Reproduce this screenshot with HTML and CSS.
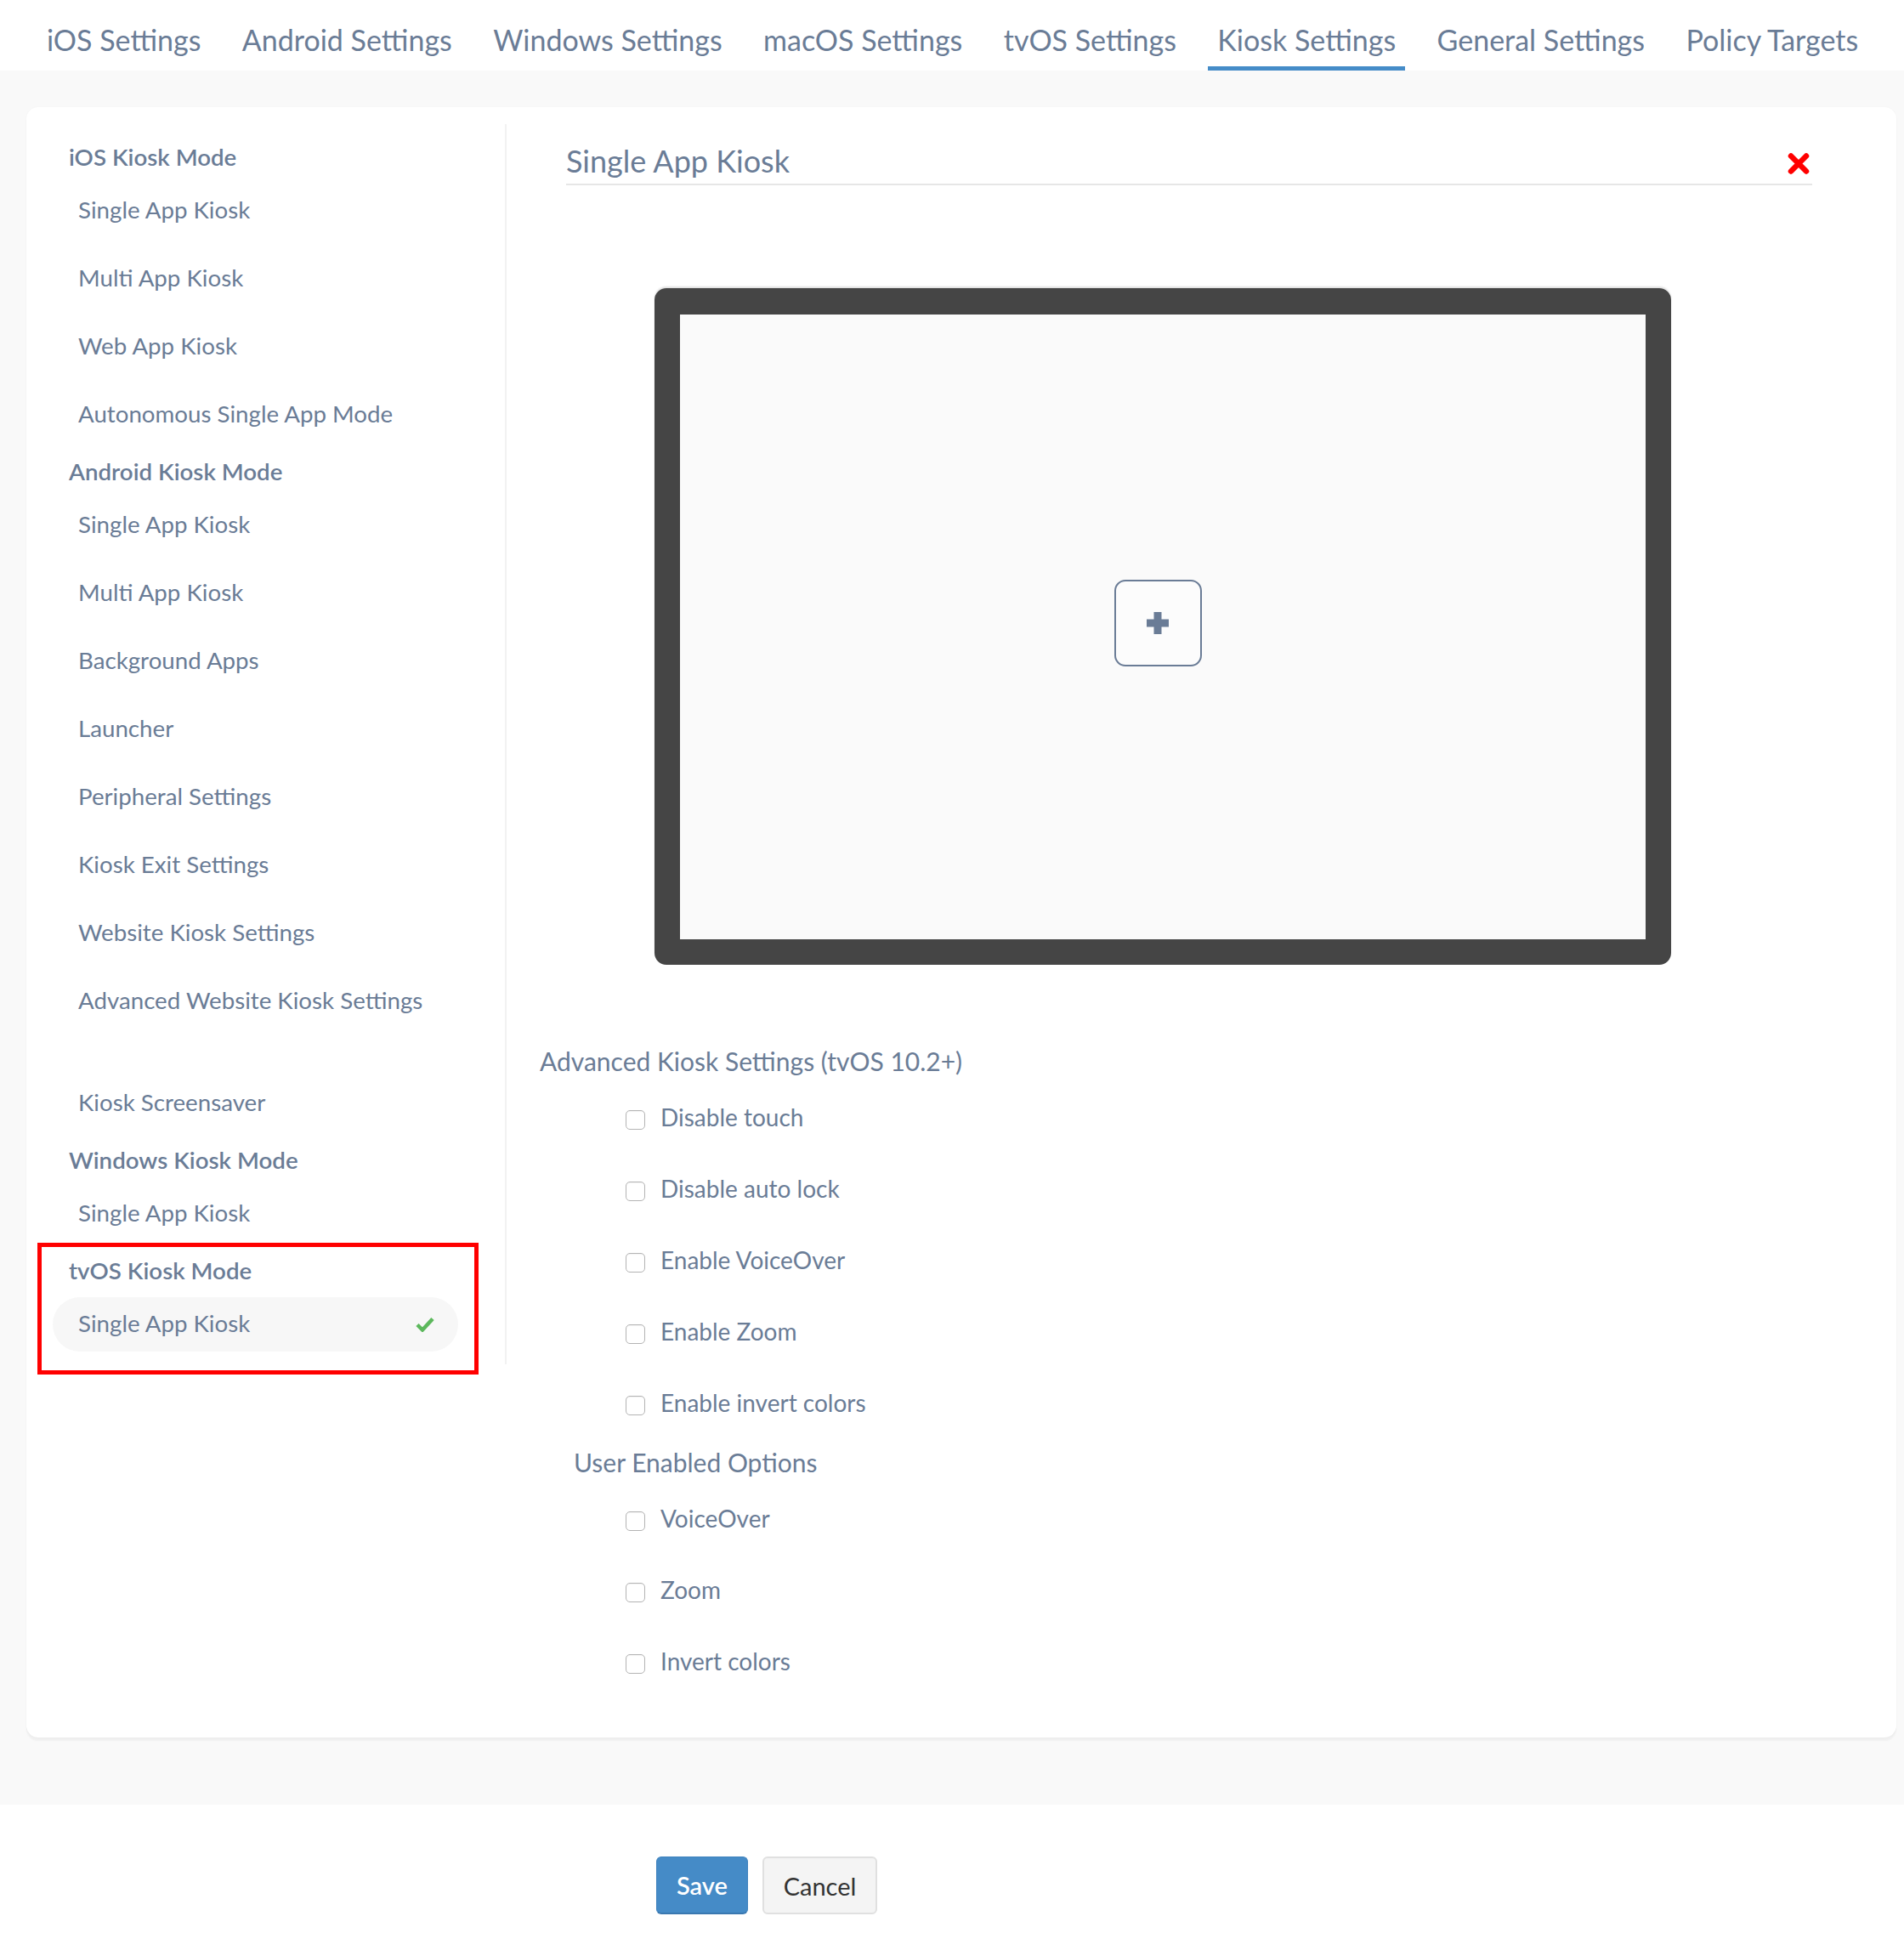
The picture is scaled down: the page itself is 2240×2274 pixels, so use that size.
FILE: index.html
```html
<!DOCTYPE html>
<html lang="en">
<head>
  <meta charset="UTF-8">
  <meta name="viewport" content="width=device-width, initial-scale=1.0">
  <title>Kiosk Settings</title>
  <link rel="stylesheet" href="styles.css">
</head>
<body>
  <nav class="tabs">
    <a class="tab">iOS Settings</a>
    <a class="tab">Android Settings</a>
    <a class="tab">Windows Settings</a>
    <a class="tab">macOS Settings</a>
    <a class="tab">tvOS Settings</a>
    <a class="tab active">Kiosk Settings</a>
    <a class="tab">General Settings</a>
    <a class="tab">Policy Targets</a>
  </nav>

  <div class="content">
    <div class="card">
      <aside class="side">
        <div class="group">
          <div class="group-title">iOS Kiosk Mode</div>
          <a class="item">Single App Kiosk</a>
          <a class="item">Multi App Kiosk</a>
          <a class="item">Web App Kiosk</a>
          <a class="item">Autonomous Single App Mode</a>
        </div>
        <div class="group">
          <div class="group-title">Android Kiosk Mode</div>
          <a class="item">Single App Kiosk</a>
          <a class="item">Multi App Kiosk</a>
          <a class="item">Background Apps</a>
          <a class="item">Launcher</a>
          <a class="item">Peripheral Settings</a>
          <a class="item">Kiosk Exit Settings</a>
          <a class="item">Website Kiosk Settings</a>
          <a class="item">Advanced Website Kiosk Settings</a>
          <div class="spacer"></div>
          <a class="item">Kiosk Screensaver</a>
        </div>
        <div class="group">
          <div class="group-title">Windows Kiosk Mode</div>
          <a class="item">Single App Kiosk</a>
        </div>
        <div class="group marked">
          <div class="group-title">tvOS Kiosk Mode</div>
          <a class="item selected">Single App Kiosk
            <svg class="check" width="22" height="18" viewBox="0 0 22 18"><path d="M2 9.5 L8 15.5 L20 2.5" fill="none" stroke="#5cb85c" stroke-width="4.5"/></svg>
          </a>
        </div>
      </aside>

      <section class="main">
        <div class="title-row">
          <h2>Single App Kiosk</h2>
          <svg class="close" width="26" height="25" viewBox="0 0 26 25"><path d="M4 3.5 L22 21.5 M22 3.5 L4 21.5" stroke="#ff0000" stroke-width="6.5" stroke-linecap="round"/></svg>
        </div>

        <div class="device">
          <div class="screen">
            <button class="add">
              <svg width="26" height="26" viewBox="0 0 26 26"><rect x="8.5" y="0" width="9" height="26" fill="#6a7c96"/><rect x="0" y="8.5" width="26" height="9" fill="#6a7c96"/></svg>
            </button>
          </div>
        </div>

        <h3 class="section-title">Advanced Kiosk Settings (tvOS 10.2+)</h3>
        <label class="check-row"><span class="box"></span>Disable touch</label>
        <label class="check-row"><span class="box"></span>Disable auto lock</label>
        <label class="check-row"><span class="box"></span>Enable VoiceOver</label>
        <label class="check-row"><span class="box"></span>Enable Zoom</label>
        <label class="check-row"><span class="box"></span>Enable invert colors</label>

        <h3 class="section-title sub">User Enabled Options</h3>
        <label class="check-row"><span class="box"></span>VoiceOver</label>
        <label class="check-row"><span class="box"></span>Zoom</label>
        <label class="check-row"><span class="box"></span>Invert colors</label>
      </section>
    </div>
  </div>

  <div class="actions">
    <button class="btn save">Save</button>
    <button class="btn cancel">Cancel</button>
  </div>
</body>
</html>
```

FILE: styles.css
```css
body {
  margin: 0;
  font-family: Lato, "Open Sans", sans-serif;
  color: #6a7c96;
  background: #fff;
}
.tabs {
  display: flex;
  height: 83px;
  padding-left: 44px;
  background: #fff;
}
.tab {
  padding: 26px 11px 11px;
  margin-right: 26.4px;
  font-size: 34px;
  line-height: 41px;
  border-bottom: 5px solid transparent;
  white-space: nowrap;
  cursor: pointer;
}
.tab.active {
  border-bottom-color: #458cc8;
}
.content {
  background: #f9f9f9;
  padding: 43px 9px 79px 31px;
}
.card {
  display: flex;
  align-items: flex-start;
  background: #fff;
  border-radius: 14px;
  box-shadow: 0 4px 2px rgba(0, 0, 0, 0.04), 0 0 2px rgba(0, 0, 0, 0.04);
}
.side {
  width: 563px;
  margin-top: 20px;
  padding: 18px 0 7px;
  border-right: 2px solid #f2f2f2;
}
.group {
  position: relative;
  display: flex;
  flex-direction: column;
}
.group + .group {
  margin-top: 6px;
}
.group-title {
  height: 44px;
  line-height: 42px;
  padding-left: 50px;
  font-size: 27.7px;
  font-weight: 600;
}
.item {
  position: relative;
  display: block;
  height: 64px;
  line-height: 62px;
  margin: 8px 0 8px 31px;
  padding-left: 30px;
  width: 477px;
  box-sizing: border-box;
  font-size: 27.7px;
  border-radius: 32px;
  cursor: pointer;
}
.item.selected {
  background: #f7f7f7;
}
.check {
  position: absolute;
  right: 28px;
  top: 23px;
}
.spacer {
  height: 40px;
}
.group.marked::after {
  content: "";
  position: absolute;
  top: -12px;
  bottom: -19px;
  left: 13px;
  width: 519px;
  box-sizing: border-box;
  border: 5px solid #ff0000;
}
.main {
  flex: 1;
  padding: 42px 99px 48px 39px;
}
.title-row {
  display: flex;
  justify-content: space-between;
  align-items: center;
  margin-left: 31px;
  padding-bottom: 6px;
  border-bottom: 2px solid #e6e6e6;
}
.title-row h2 {
  margin: 0;
  font-size: 36px;
  font-weight: 400;
  line-height: 42px;
}
.close {
  margin-right: 3px;
  margin-top: 6px;
}
.device {
  margin: 121px 0 0 135px;
  width: 1196px;
  height: 796px;
  box-sizing: border-box;
  border: 30px solid #454545;
  border-top-width: 31px;
  border-radius: 14px;
  box-shadow: 0 -2px 2px rgba(0, 0, 0, 0.12);
}
.screen {
  height: 100%;
  background: #fafafa;
  display: flex;
  justify-content: center;
  align-items: center;
}
.add {
  width: 103px;
  height: 102px;
  margin: 0 12px 10px 0;
  border: 2.5px solid #6a7c96;
  border-radius: 13px;
  background: #fcfcfc;
  display: flex;
  justify-content: center;
  align-items: center;
  cursor: pointer;
}
.section-title {
  margin: 95px 0 0;
  height: 42px;
  line-height: 36px;
  padding-bottom: 6px;
  box-sizing: border-box;
  font-size: 30px;
  font-weight: 400;
}
.section-title.sub {
  margin-top: 10px;
  padding-left: 40px;
}
.check-row {
  display: flex;
  align-items: center;
  height: 84px;
  padding-left: 101px;
  font-size: 28px;
  cursor: pointer;
}
.box {
  width: 23px;
  height: 23px;
  margin: 6px 18px 0 0;
  box-sizing: border-box;
  border: 1.5px solid #b4b4b4;
  border-radius: 5px;
  background: #fff;
  box-shadow: inset 0 1px 1px rgba(0, 0, 0, 0.05);
}
.actions {
  display: flex;
  gap: 17px;
  padding: 61px 0 22px 772px;
}
.btn {
  height: 68px;
  border-radius: 6px;
  font-family: Lato, "Open Sans", sans-serif;
  font-size: 29px;
  cursor: pointer;
}
.save {
  width: 108px;
  background: #458bc7;
  border: 1px solid #3f82bd;
  border-bottom: 2px solid #3a78b0;
  color: #fff;
  font-weight: 600;
}
.cancel {
  width: 135px;
  background: #f4f4f4;
  border: 2px solid #e0e0e0;
  color: #333;
}
```
